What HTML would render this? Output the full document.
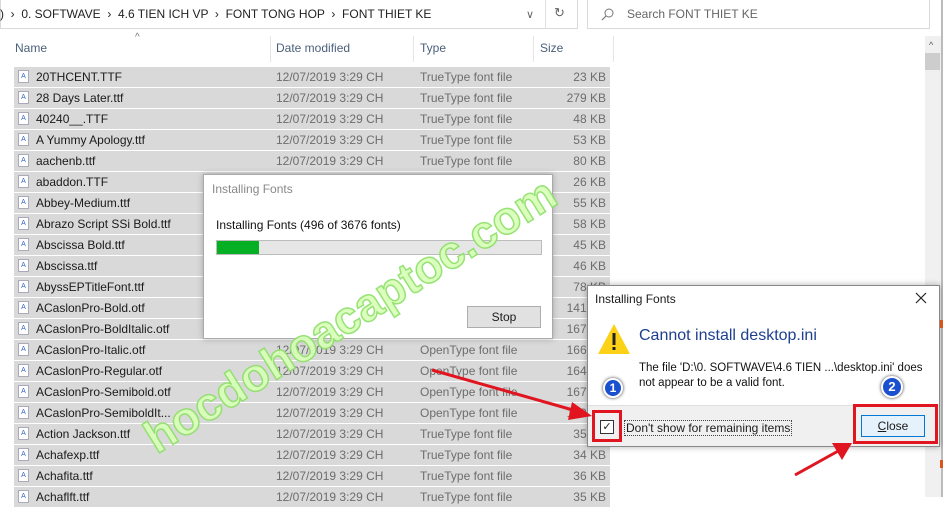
<!DOCTYPE html>
<html><head><meta charset="utf-8"><style>
*{margin:0;padding:0;box-sizing:border-box}
body{width:943px;height:497px;overflow:hidden;background:#fff;font-family:"Liberation Sans",sans-serif;font-size:12px;color:#1a1a1a;position:relative}
.abs{position:absolute}
.row{position:absolute;left:14px;width:596px;height:20px;background:#d9d9d9}
.row span{position:absolute;top:3px;white-space:nowrap}
.ic{position:absolute;left:4px;top:3px;width:11px;height:13px;background:#fff;border:1px solid #aab;font-size:7px;color:#36c;text-align:center;line-height:12px}
.hdr{position:absolute;top:41px;color:#4c607a;font-size:12px}
.btn{position:absolute;background:#e1e1e1;border:1px solid #adadad;text-align:center;font-size:12px}
</style></head><body>
<div class="abs" style="left:0;top:0;width:578px;height:29px;border:1px solid #d9d9d9;border-top:none"></div>
<div class="abs" style="left:0;top:7px;font-size:12px;color:#222;white-space:nowrap">) &nbsp;›&nbsp; 0. SOFTWAVE &nbsp;›&nbsp; 4.6 TIEN ICH VP &nbsp;›&nbsp; FONT TONG HOP &nbsp;›&nbsp; FONT THIET KE</div>
<div class="abs" style="left:526px;top:8px;color:#666;font-size:11px">∨</div>
<div class="abs" style="left:554px;top:5px;color:#666;font-size:13px">↻</div>
<div class="abs" style="left:545px;top:0;width:1px;height:29px;background:#e0e0e0"></div>
<div class="abs" style="left:587px;top:0;width:343px;height:29px;border:1px solid #d9d9d9;border-top:none"></div>
<svg class="abs" style="left:601px;top:7px" width="14" height="14"><circle cx="8" cy="6" r="4" fill="none" stroke="#777" stroke-width="1"/><line x1="5" y1="9" x2="1" y2="13" stroke="#777" stroke-width="1.2"/></svg>
<div class="abs" style="left:627px;top:7px;color:#666">Search FONT THIET KE</div>
<div class="abs" style="left:135px;top:32px;color:#777;font-size:10px">^</div>
<div class="hdr" style="left:15px">Name</div>
<div class="hdr" style="left:276px">Date modified</div>
<div class="hdr" style="left:420px">Type</div>
<div class="hdr" style="left:540px">Size</div>
<div class="abs" style="left:270px;top:36px;width:1px;height:26px;background:#e5e5e5"></div>
<div class="abs" style="left:413px;top:36px;width:1px;height:26px;background:#e5e5e5"></div>
<div class="abs" style="left:533px;top:36px;width:1px;height:26px;background:#e5e5e5"></div>
<div class="abs" style="left:613px;top:36px;width:1px;height:26px;background:#e5e5e5"></div>
<div class="abs" style="left:925px;top:36px;width:17px;height:461px;background:#f0f0f0"></div>
<div class="abs" style="left:929px;top:40px;color:#555;font-size:9px">^</div>
<div class="abs" style="left:925px;top:53px;width:15px;height:17px;background:#cdcdcd"></div>
<div class="abs" style="left:941px;top:0;width:2px;height:497px;background:#bbb"></div>
<div id="rows"></div>
<script>
var n=[["20THCENT.TTF","TrueType","23"],["28 Days Later.ttf","TrueType","279"],["40240__.TTF","TrueType","48"],["A Yummy Apology.ttf","TrueType","53"],["aachenb.ttf","TrueType","80"],["abaddon.TTF","TrueType","26"],["Abbey-Medium.ttf","TrueType","55"],["Abrazo Script SSi Bold.ttf","TrueType","58"],["Abscissa Bold.ttf","TrueType","45"],["Abscissa.ttf","TrueType","46"],["AbyssEPTitleFont.ttf","TrueType","78"],["ACaslonPro-Bold.otf","OpenType","141"],["ACaslonPro-BoldItalic.otf","OpenType","167"],["ACaslonPro-Italic.otf","OpenType","166"],["ACaslonPro-Regular.otf","OpenType","164"],["ACaslonPro-Semibold.otf","OpenType","167"],["ACaslonPro-SemiboldIt...","OpenType","169"],["Action Jackson.ttf","TrueType","35"],["Achafexp.ttf","TrueType","34"],["Achafita.ttf","TrueType","36"],["Achaflft.ttf","TrueType","35"]];
var h="";n.forEach(function(r,i){var y=67+i*21;h+='<div class="row" style="top:'+y+'px"><div class="ic">A</div><span style="left:22px">'+r[0]+'</span><span style="left:262px;color:#6d6d6d">12/07/2019 3:29 CH</span><span style="left:406px;color:#6d6d6d">'+r[1]+' font file</span><span style="right:4px;color:#6d6d6d">'+r[2]+' KB</span></div>';});
document.getElementById("rows").innerHTML=h;
</script>
<div class="abs" style="left:203px;top:174px;width:350px;height:165px;background:#fff;border:1px solid #aaa;box-shadow:0 0 6px rgba(0,0,0,.25)"></div>
<div class="abs" style="left:212px;top:182px;color:#888;font-size:12px">Installing Fonts</div>
<div class="abs" style="left:216px;top:218px;font-size:12px;color:#111">Installing Fonts (496 of 3676 fonts)</div>
<div class="abs" style="left:216px;top:240px;width:326px;height:15px;background:#e6e6e6;border:1px solid #bcbcbc"></div>
<div class="abs" style="left:217px;top:241px;width:42px;height:13px;background:#06b025"></div>
<div class="btn" style="left:467px;top:306px;width:74px;height:22px;line-height:20px">Stop</div>
<div class="abs" style="left:100px;top:288px;width:500px;transform:rotate(-32deg);transform-origin:center;font:bold 46px 'Liberation Sans',sans-serif;color:#d8ffb8;-webkit-text-stroke:1.5px #8fe06a;white-space:nowrap;opacity:.92;text-align:center">hocdohoacaptoc.com</div>
<div class="abs" style="left:587px;top:285px;width:353px;height:162px;background:#fff;border:1px solid #888;box-shadow:0 0 6px rgba(0,0,0,.3)"></div>
<div class="abs" style="left:595px;top:292px;font-size:12px">Installing Fonts</div>
<svg class="abs" style="left:915px;top:292px" width="12" height="12"><path d="M1 1L11 11M11 1L1 11" stroke="#222" stroke-width="1.2"/></svg>
<svg class="abs" style="left:597px;top:323px" width="34" height="32"><polygon points="17,1 33,31 1,31" fill="#fcd116"/><rect x="15.5" y="10" width="3" height="12" fill="#222"/><rect x="15.5" y="24" width="3" height="3" fill="#222"/></svg>
<div class="abs" style="left:639px;top:327px;font-size:16px;color:#1e3f8f">Cannot install desktop.ini</div>
<div class="abs" style="left:639px;top:361px;font-size:11.5px;line-height:15px;color:#111;width:300px">The file 'D:\0. SOFTWAVE\4.6 TIEN ...\desktop.ini' does not appear to be a valid font.</div>
<div class="abs" style="left:588px;top:405px;width:351px;height:41px;background:#f0f0f0;border-top:1px solid #dfdfdf"></div>
<div class="abs" style="left:600px;top:420px;width:14px;height:14px;border:1px solid #333;background:#fff;font-size:11px;line-height:12px;text-align:center">✓</div>
<div class="abs" style="left:624px;top:420px;font-size:12px;border:1px dotted #444;padding:0 1px">Don't show for remaining items</div>
<div class="btn" style="left:861px;top:415px;width:64px;height:22px;line-height:20px;border:1px solid #0078d7;background:#e5f1fb"><u>C</u>lose</div>
<div class="abs" style="left:592px;top:410px;width:30px;height:32px;border:3px solid #e0151f"></div>
<div class="abs" style="left:853px;top:404px;width:85px;height:40px;border:3px solid #e0151f"></div>
<div class="abs" style="left:603px;top:378px;width:20px;height:20px;border-radius:50%;background:#1a4fd0;border:2px solid #fff;box-shadow:0 0 3px #333;color:#fff;font:bold 12px 'Liberation Sans';text-align:center;line-height:16px">1</div>
<div class="abs" style="left:881px;top:376px;width:22px;height:22px;border-radius:50%;background:#1a4fd0;border:2px solid #fff;box-shadow:0 0 3px #333;color:#fff;font:bold 13px 'Liberation Sans';text-align:center;line-height:18px">2</div>
<svg class="abs" style="left:0;top:0" width="943" height="497">
<line x1="432" y1="370" x2="580" y2="412" stroke="#e0151f" stroke-width="3"/>
<polygon points="592,416 572,402 568,420" fill="#e0151f"/>
<line x1="795" y1="475" x2="840" y2="450" stroke="#e0151f" stroke-width="3"/>
<polygon points="852,443 832,443 842,460" fill="#e0151f"/>
</svg>
<div class="abs" style="left:940px;top:320px;width:3px;height:8px;background:#d9541c"></div>
<div class="abs" style="left:940px;top:460px;width:3px;height:8px;background:#d9541c"></div>
</body></html>
